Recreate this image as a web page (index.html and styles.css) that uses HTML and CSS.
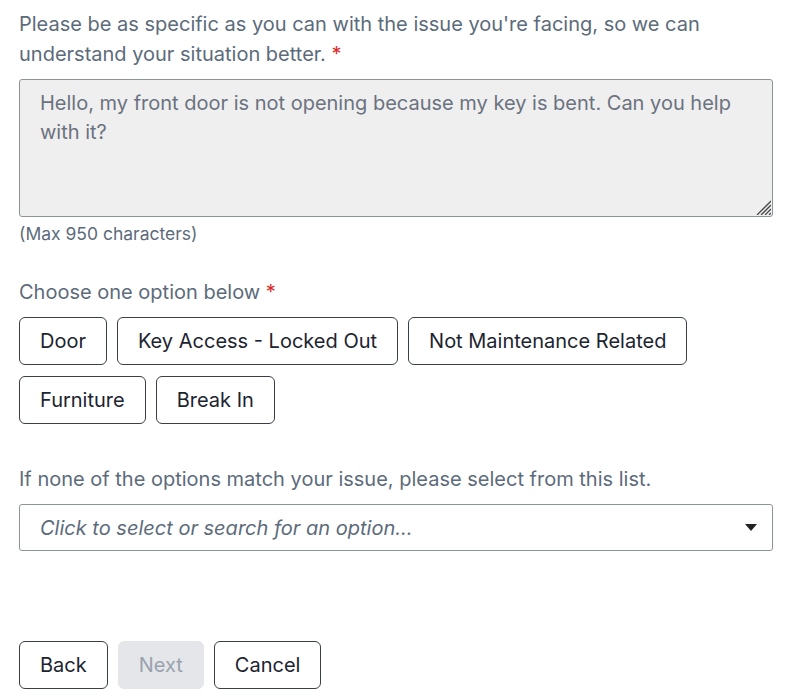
FILE: index.html
```html
<!DOCTYPE html>
<html>
<head>
<meta charset="utf-8">
<link rel="stylesheet" href="styles.css">
</head>
<body>
<div class="page">
  <p class="label">Please be as specific as you can with the issue you're facing, so we can understand your situation better. <span class="req">*</span></p>
  <div class="textarea">Hello, my front door is not opening because my key is bent. Can you help with it?
    <svg class="grip" width="16" height="16" viewBox="0 0 16 16"><path d="M16 2 L2 16 M16 6 L6 16 M16 10 L10 16 M16 14 L14 16" stroke="#4a4a4a" stroke-width="1.3" fill="none"/></svg>
  </div>
  <div class="hint">(Max 950 characters)</div>

  <p class="label choose">Choose one option below <span class="req">*</span></p>
  <div class="options">
    <button class="btn">Door</button>
    <button class="btn">Key Access - Locked Out</button>
    <button class="btn">Not Maintenance Related</button>
    <button class="btn">Furniture</button>
    <button class="btn">Break In</button>
  </div>

  <p class="label none">If none of the options match your issue, please select from this list.</p>
  <div class="select">
    <span class="placeholder">Click to select or search for an option...</span>
    <svg class="caret" width="12" height="8" viewBox="0 0 12 8"><path d="M0 0 H12 L6 7 Z" fill="#222"/></svg>
  </div>

  <div class="actions">
    <button class="btn">Back</button>
    <button class="btn disabled">Next</button>
    <button class="btn">Cancel</button>
  </div>
</div>
</body>
</html>
```
FILE: styles.css
```css
html, body {
  margin: 0;
  padding: 0;
  background: #ffffff;
}
body {
  font-family: Inter, "Noto Sans", sans-serif;
  color: #5c6b7b;
}
.page {
  padding: 9px 15px 0 19px;
}
.label {
  margin: 0;
  font-size: 20px;
  line-height: 30px;
}
.req {
  color: #d92b2b;
}
.textarea {
  position: relative;
  margin-top: 10px;
  height: 138px;
  box-sizing: border-box;
  background: #efefef;
  border: 1px solid #8d939b;
  border-radius: 3px;
  padding: 9px 20px;
  font-size: 20px;
  line-height: 29px;
  color: #6b7280;
}
.grip {
  position: absolute;
  right: 1px;
  bottom: 1px;
}
.hint {
  font-size: 17.5px;
  line-height: 20px;
  margin-top: 7px;
  color: #5c6b7b;
}
.choose {
  margin-top: 33px;
}
.options {
  display: flex;
  flex-wrap: wrap;
  gap: 11px 10px;
  margin-top: 10px;
  width: 700px;
}
.btn {
  font-family: Inter, "Noto Sans", sans-serif;
  font-size: 20px;
  height: 48px;
  padding: 0 20px;
  background: #ffffff;
  border: 1px solid #3a3f47;
  border-radius: 6px;
  color: #1c2430;
  line-height: 46px;
  cursor: pointer;
}
.btn.disabled {
  background: #e4e6e9;
  border-color: #e4e6e9;
  color: #9aa2ad;
}
.none {
  margin-top: 40px;
}
.select {
  margin-top: 10px;
  height: 47px;
  box-sizing: border-box;
  border: 1px solid #8d939b;
  border-radius: 3px;
  display: flex;
  align-items: center;
  justify-content: space-between;
  padding: 0 15px 0 20px;
}
.placeholder {
  font-style: italic;
  font-size: 20px;
  color: #5c6b7b;
}
.actions {
  display: flex;
  gap: 10px;
  margin-top: 90px;
}
```
